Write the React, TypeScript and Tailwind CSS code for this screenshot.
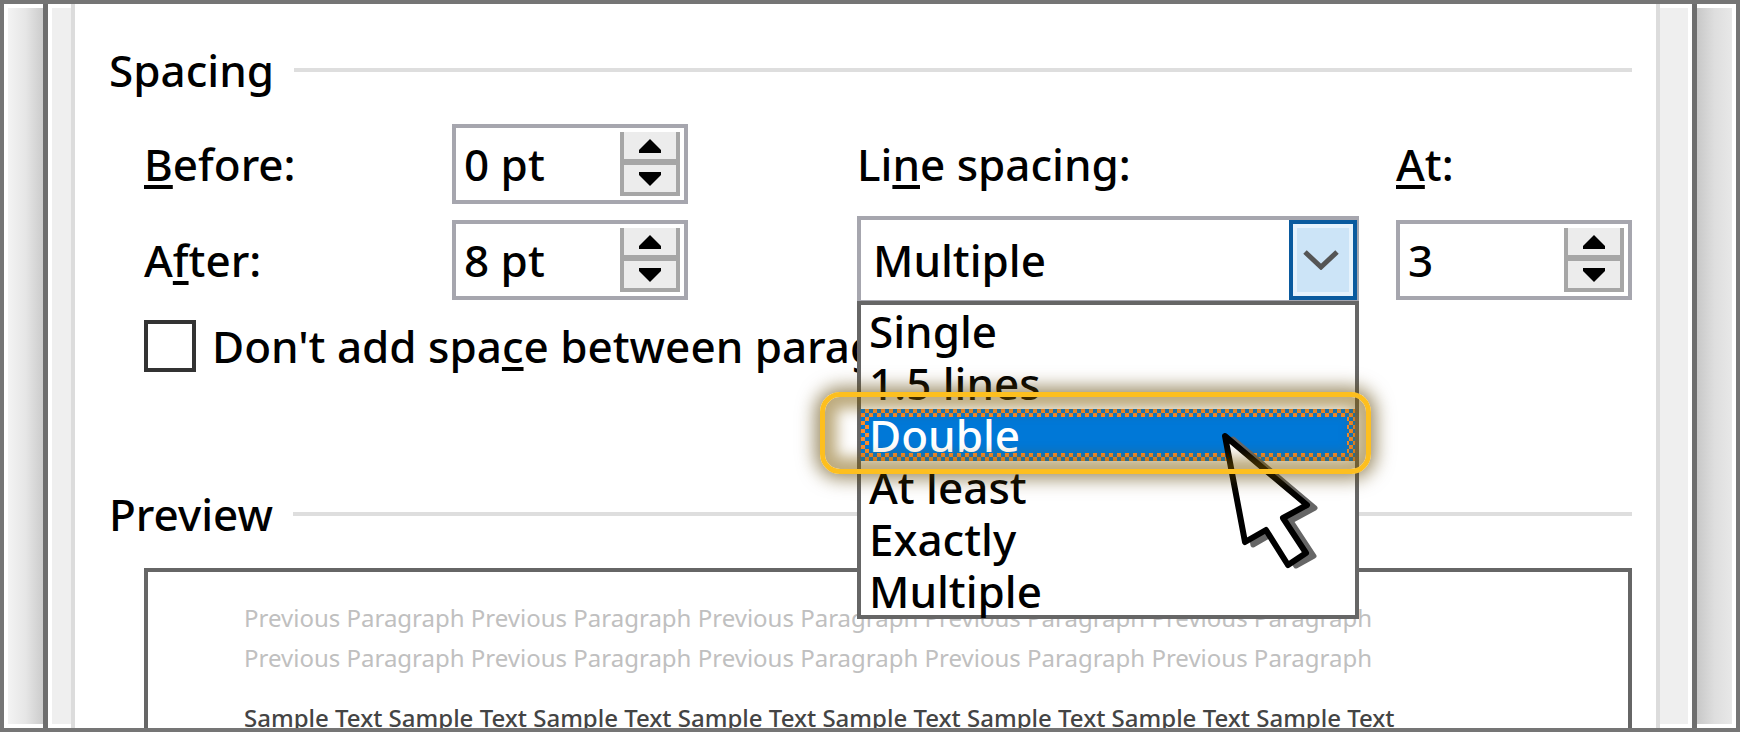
const options = ["Single", "1.5 lines", "Double", "At least", "Exactly", "Multiple"];

const previousText = Array(5).fill("Previous Paragraph").join(" ");
const sampleText = Array(8).fill("Sample Text").join(" ");

type KeyedTextProps = {
  text: string;
  index: number;
};

const KeyedText = ({ text, index }: KeyedTextProps) => (
  <>
    {text.slice(0, index)}
    <span className="underline decoration-4 underline-offset-4 [text-decoration-skip-ink:none]">{text[index]}</span>
    {text.slice(index + 1)}
  </>
);

type SpinnerProps = {
  id: string;
  value: string;
};

const Spinner = ({ id, value }: SpinnerProps) => (
  <div className="flex h-20 w-[236px] border-4 border-[#a6a6ae] bg-white p-1">
    <input id={id} defaultValue={value} className="min-w-0 flex-1 pl-1 outline-none" />
    <div className="flex w-[60px] flex-col border-x-4 border-b-4 border-[#a6a6a6] bg-[#ececec]">
      <button type="button" aria-label="Increase" className="flex flex-1 items-center justify-center border-b-3 border-[#a6a6a6]">
        <svg className="h-3.5 w-[22px]" viewBox="0 0 22 14">
          <path d="M11 0 22 11v3H0v-3z" />
        </svg>
      </button>
      <button type="button" aria-label="Decrease" className="flex flex-1 items-center justify-center border-t-3 border-[#a6a6a6]">
        <svg className="h-3.5 w-[22px]" viewBox="0 0 22 14">
          <path d="M0 0h22v3L11 14 0 3z" />
        </svg>
      </button>
    </div>
  </div>
);

const SectionTitle = ({ title }: { title: string }) => (
  <div className="flex items-center gap-5">
    <h2 className="leading-[60px]">{title}</h2>
    <div className="h-1 flex-1 bg-[#dedede]" />
  </div>
);

const Cursor = () => (
  <svg className="absolute top-[128px] left-[363px] h-[140px] w-[100px]" viewBox="0 0 100 140" strokeLinejoin="round">
    <path d="M13 10 95 79 71 92 94 127 76 137 54 104 33 116z" fill="#666" stroke="#666" strokeWidth="5" />
    <path d="M5 7 87 76 63 89 86 124 68 136 46 101 25 113z" fill="#fff" stroke="#000" strokeWidth="6" />
  </svg>
);

const LineSpacing = () => (
  <div className="relative h-[88px]">
    <select
      id="line-spacing"
      defaultValue="Multiple"
      className="h-full w-full appearance-none border-4 border-[#a6a6ae] bg-white pl-3 outline-none"
    >
      {options.map(option => (
        <option key={option}>{option}</option>
      ))}
    </select>
    <span className="pointer-events-none absolute top-1 right-0.5 flex h-20 w-[68px] items-center justify-center border-4 border-[#0a5a9e] bg-[#cce4f7] pr-1 inset-ring-4 inset-ring-[#e6f2fc]">
      <svg className="h-5 w-9" viewBox="0 0 36 20" fill="none" stroke="#555" strokeWidth="5">
        <path d="M2 2 18 17 34 2" />
      </svg>
    </span>
    <div className="absolute top-[85px] left-0 z-10 w-full">
      <ul role="listbox" aria-label="Line spacing" className="border-4 border-[#666] bg-white leading-[52px]">
        {options.map(option =>
          option === "Double" ? (
            <li
              key={option}
              role="option"
              aria-selected
              className="h-[52px] bg-[linear-gradient(#0078d7,#0078d7),repeating-conic-gradient(#ff8c28_0_25%,#0078d7_0_50%)] [background-size:calc(100%-16px)_calc(100%-16px),8px_8px] [background-position:center,0_0] [background-repeat:no-repeat,repeat] pl-2 text-white"
            >
              {option}
            </li>
          ) : (
            <li key={option} role="option" aria-selected={false} className="h-[52px] pl-2 last:h-[50px]">
              {option}
            </li>
          )
        )}
      </ul>
      <Cursor />
      <div className="absolute top-[91px] -right-3 -left-[37px] h-[82px] rounded-[20px] border-5 border-[#fdbf1f] shadow-[0_0_18px_5px_rgba(90,65,0,0.6),inset_0_0_14px_12px_rgba(125,90,0,0.5)]" />
    </div>
  </div>
);

const Edge = ({ side }: { side: "left" | "right" }) =>
  side === "left" ? (
    <div className="flex shrink-0">
      <div className="my-1 ml-1 w-[35px] bg-linear-to-r from-[#f3f3f3] via-[#e6e6e6] to-[#cccccc]" />
      <div className="w-[5px] bg-[#6e6e6e]" />
      <div className="my-1 ml-1 w-[19px] bg-[#efefef]" />
      <div className="w-1 bg-[#dcdcdc]" />
    </div>
  ) : (
    <div className="flex shrink-0">
      <div className="w-1 bg-[#dcdcdc]" />
      <div className="my-1 mr-1 w-7 bg-[#efefef]" />
      <div className="w-[5px] bg-[#6e6e6e]" />
      <div className="my-1 mr-1 w-[35px] bg-linear-to-r from-[#c8c8c8] via-[#dedede] to-[#e8e8e8]" />
    </div>
  );

const App = () => (
  <div className="flex h-screen overflow-hidden border-4 border-[#757575] bg-white font-['Noto_Sans','Open_Sans',sans-serif] text-[44px] leading-[60px] font-medium text-black">
    <Edge side="left" />
    <main className="flex min-w-0 flex-1 flex-col pt-9 pr-6 pl-[34px]">
      <SectionTitle title="Spacing" />
      <div className="mt-6 grid grid-cols-[308px_236px_1fr_502px_273px] items-center gap-y-3 pl-[35px]">
        <label htmlFor="before">
          <KeyedText text="Before:" index={0} />
        </label>
        <Spinner id="before" value="0 pt" />
        <label htmlFor="line-spacing" className="col-start-4">
          <KeyedText text="Line spacing:" index={2} />
        </label>
        <label htmlFor="at" className="pl-[37px]">
          <KeyedText text="At:" index={0} />
        </label>
        <label htmlFor="after">
          <KeyedText text="After:" index={1} />
        </label>
        <Spinner id="after" value="8 pt" />
        <div className="col-start-4">
          <LineSpacing />
        </div>
        <div className="pl-[37px]">
          <Spinner id="at" value="3" />
        </div>
      </div>
      <div className="mt-3 flex items-center gap-4 pl-[35px]">
        <input id="no-space" type="checkbox" className="size-[52px] appearance-none border-4 border-[#333] bg-white" />
        <label htmlFor="no-space">
          <KeyedText text="Don't add space between paragraphs" index={13} />
        </label>
      </div>
      <div className="mt-[108px]">
        <SectionTitle title="Preview" />
      </div>
      <div className="mt-6 ml-[35px] flex-1 overflow-hidden border-4 border-b-0 border-[#666] px-24 pt-[26px] text-2xl leading-10 whitespace-nowrap text-[#c0c0c0]">
        <p className="font-normal">{previousText}</p>
        <p className="font-normal">{previousText}</p>
        <p className="mt-5 text-[#444]">{sampleText}</p>
      </div>
    </main>
    <Edge side="right" />
  </div>
);

export default App;
